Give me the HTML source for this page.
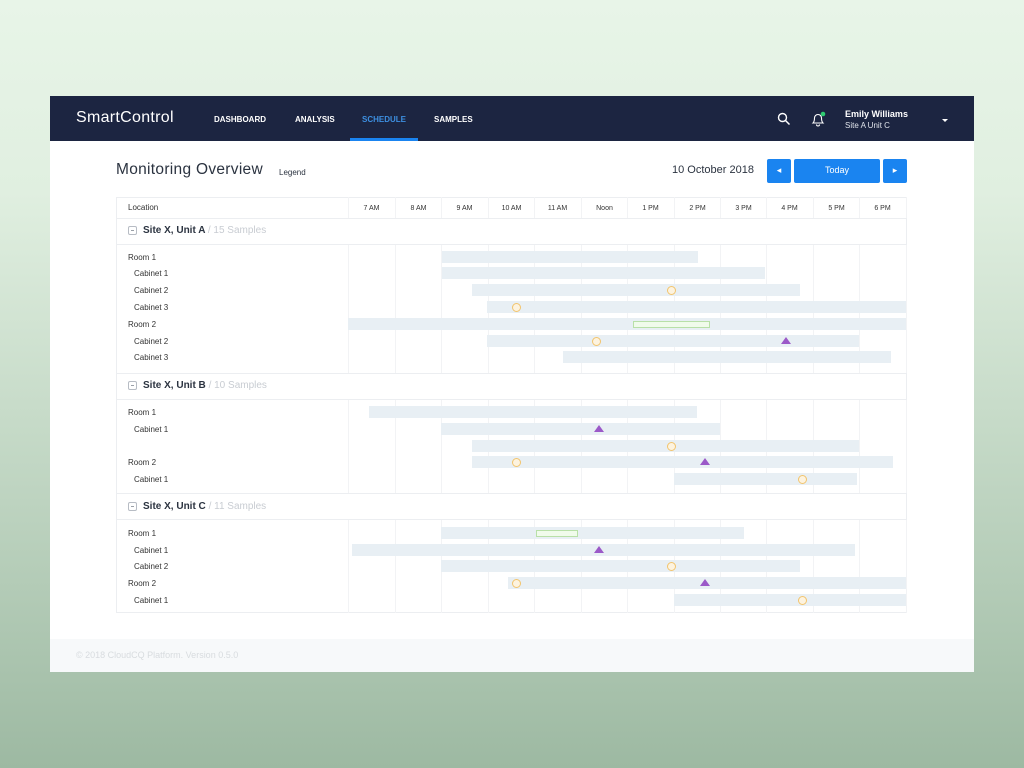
<!DOCTYPE html><html><head><style>
*{margin:0;padding:0;box-sizing:border-box}
body{width:1024px;height:768px;overflow:hidden;position:relative;background:linear-gradient(#e8f5e8,#e0efe0 25%,#b9d0bc 70%,#9db9a2);font-family:"Liberation Sans",sans-serif;color:#2b3340}
.a{position:absolute}
.card{left:50px;top:96px;width:924px;height:576px;background:#fff}
.nav{left:50px;top:96px;width:924px;height:45px;background:#1c2541}
.nl{color:#fff;font-size:8px;font-weight:bold;top:115px}
.vl{width:1px;background:#f2f3f5}
.hl{height:1px;background:#eceef1;left:116px;width:791px}
.t{font-size:7px;color:#333;top:205px;width:46px;text-align:center}
.lb{font-size:8px;color:#333}
.b{height:12px;background:#e8eff4}
.c{width:9px;height:9px;border:1.5px solid #f2c46d;border-radius:50%;background:#fdf3df}
.tr{width:0;height:0;border-left:5px solid transparent;border-right:5px solid transparent;border-bottom:7px solid #9b59c8}
.g{height:7px;border:1px solid #b8e0a8;background:#f0fbeb}
.sh{font-size:10px;font-weight:bold;color:#2b3340}
.sh span{font-weight:normal;color:#c8ccd2}
.mi{width:9px;height:9px;border:1px solid #b7bcc4;border-radius:2px}
.mi:after{content:"";position:absolute;left:2px;top:3px;width:3px;height:1px;background:#9aa0a8}
.btn{background:#1a84f0;border-radius:2px;top:159px;height:24px;color:#fff;font-size:9px;text-align:center;line-height:22px}
</style></head><body>
<div class="a card"></div>
<div class="a nav"></div>
<div class="a" style="left:76px;top:109px;color:#fff;font-size:16px;letter-spacing:.3px">SmartControl</div>
<div class="a nl" style="left:214px">DASHBOARD</div>
<div class="a nl" style="left:295px">ANALYSIS</div>
<div class="a nl" style="left:362px;color:#3d8fe0">SCHEDULE</div>
<div class="a nl" style="left:434px">SAMPLES</div>
<div class="a" style="left:350px;top:138px;width:68px;height:3px;background:#1a84f0"></div>
<svg class="a" style="left:777px;top:112px" width="14" height="14"><circle cx="5.5" cy="5.5" r="4" fill="none" stroke="#fff" stroke-width="1.4"/><path d="M8.5 8.5l4 4" stroke="#fff" stroke-width="1.5"/></svg>
<svg class="a" style="left:809px;top:110px" width="18" height="18"><path d="M4 13c1.5-1.5 1.5-3 1.5-5a3.5 3.5 0 0 1 7 0c0 2 0 3.5 1.5 5z M7.5 14.5a1.5 1.5 0 0 0 3 0" fill="none" stroke="#fff" stroke-width="1.1"/><circle cx="14" cy="4" r="2.3" fill="#2ecc71"/></svg>
<div class="a" style="left:845px;top:109px;color:#fff;font-size:9px;font-weight:bold">Emily Williams</div>
<div class="a" style="left:845px;top:121px;color:#dfe3ea;font-size:8px">Site A Unit C</div>
<div class="a" style="left:942px;top:119px;border-left:3px solid transparent;border-right:3px solid transparent;border-top:3px solid #fff"></div>
<div class="a" style="left:116px;top:161px;font-size:15.5px;letter-spacing:.3px;color:#2b3340">Monitoring Overview</div>
<div class="a" style="left:279px;top:168px;font-size:8px">Legend</div>
<div class="a" style="left:672px;top:164px;font-size:11px">10 October 2018</div>
<div class="a btn" style="left:767px;width:24px">◂</div>
<div class="a btn" style="left:794px;width:86px">Today</div>
<div class="a btn" style="left:883px;width:24px">▸</div>
<div class="a" style="left:116px;top:197px;width:791px;height:416px;border:1px solid #eceef1"></div>
<div class="a lb" style="left:128px;top:203px">Location</div>
<div id="grid"></div>
<div class="a" style="left:50px;top:639px;width:924px;height:33px;background:#f7f9fa"></div>
<div class="a" style="left:76px;top:650px;font-size:9px;color:#d8dcdf">© 2018 CloudCQ Platform. Version 0.5.0</div>
<script>
var h='';
var xs=[348,395,441,488,534,581,627,674,720,766,813,859,906];
var tm=['7 AM','8 AM','9 AM','10 AM','11 AM','Noon','1 PM','2 PM','3 PM','4 PM','5 PM','6 PM'];
var segs=[[197,218],[244,373],[399,493],[519,613]];
xs.forEach(function(x){segs.forEach(function(s){h+='<div class="a vl" style="left:'+x+'px;top:'+s[0]+'px;height:'+(s[1]-s[0])+'px"></div>'})});
tm.forEach(function(t,i){h+='<div class="a t" style="left:'+(xs[i]+0.5)+'px">'+t+'</div>'});
[218,244,373,399,493,519].forEach(function(y){h+='<div class="a hl" style="top:'+y+'px"></div>'});
[[230,'Site X, Unit A','15'],[385,'Site X, Unit B','10'],[506,'Site X, Unit C','11']].forEach(function(s){
h+='<div class="a mi" style="left:128px;top:'+(s[0]-4)+'px"></div><div class="a sh" style="left:143px;top:'+(s[0]-5)+'px">'+s[1]+' <span>/ '+s[2]+' Samples</span></div>'});
var R=[[257,'Room 1',442,698],[273,'Cabinet 1',442,765],[290,'Cabinet 2',472,800,[['c',671]]],[307,'Cabinet 3',487,906,[['c',516]]],[324,'Room 2',348,906,[['g',633,710]]],[341,'Cabinet 2',487,859,[['c',596],['t',786]]],[357,'Cabinet 3',563,891],
[412,'Room 1',369,697],[429,'Cabinet 1',441,720,[['t',599]]],[446,'',472,859,[['c',671]]],[462,'Room 2',472,893,[['c',516],['t',705]]],[479,'Cabinet 1',674,857,[['c',802]]],
[533,'Room 1',441,744,[['g',536,578]]],[550,'Cabinet 1',352,855,[['t',599]]],[566,'Cabinet 2',441,800,[['c',671]]],[583,'Room 2',508,906,[['c',516],['t',705]]],[600,'Cabinet 1',674,906,[['c',802]]]];
R.forEach(function(r){var y=r[0];
if(r[1])h+='<div class="a lb" style="left:'+(r[1].indexOf('Room')==0?128:134)+'px;top:'+(y-4)+'px">'+r[1]+'</div>';
h+='<div class="a b" style="left:'+r[2]+'px;top:'+(y-6)+'px;width:'+(r[3]-r[2])+'px"></div>';
(r[4]||[]).forEach(function(m){
if(m[0]=='c')h+='<div class="a c" style="left:'+(m[1]-4.5)+'px;top:'+(y-4.5)+'px"></div>';
if(m[0]=='t')h+='<div class="a tr" style="left:'+(m[1]-5)+'px;top:'+(y-4)+'px"></div>';
if(m[0]=='g')h+='<div class="a g" style="left:'+m[1]+'px;top:'+(y-3.5)+'px;width:'+(m[2]-m[1])+'px"></div>';
})});
document.getElementById('grid').innerHTML=h;
</script>
</body></html>
